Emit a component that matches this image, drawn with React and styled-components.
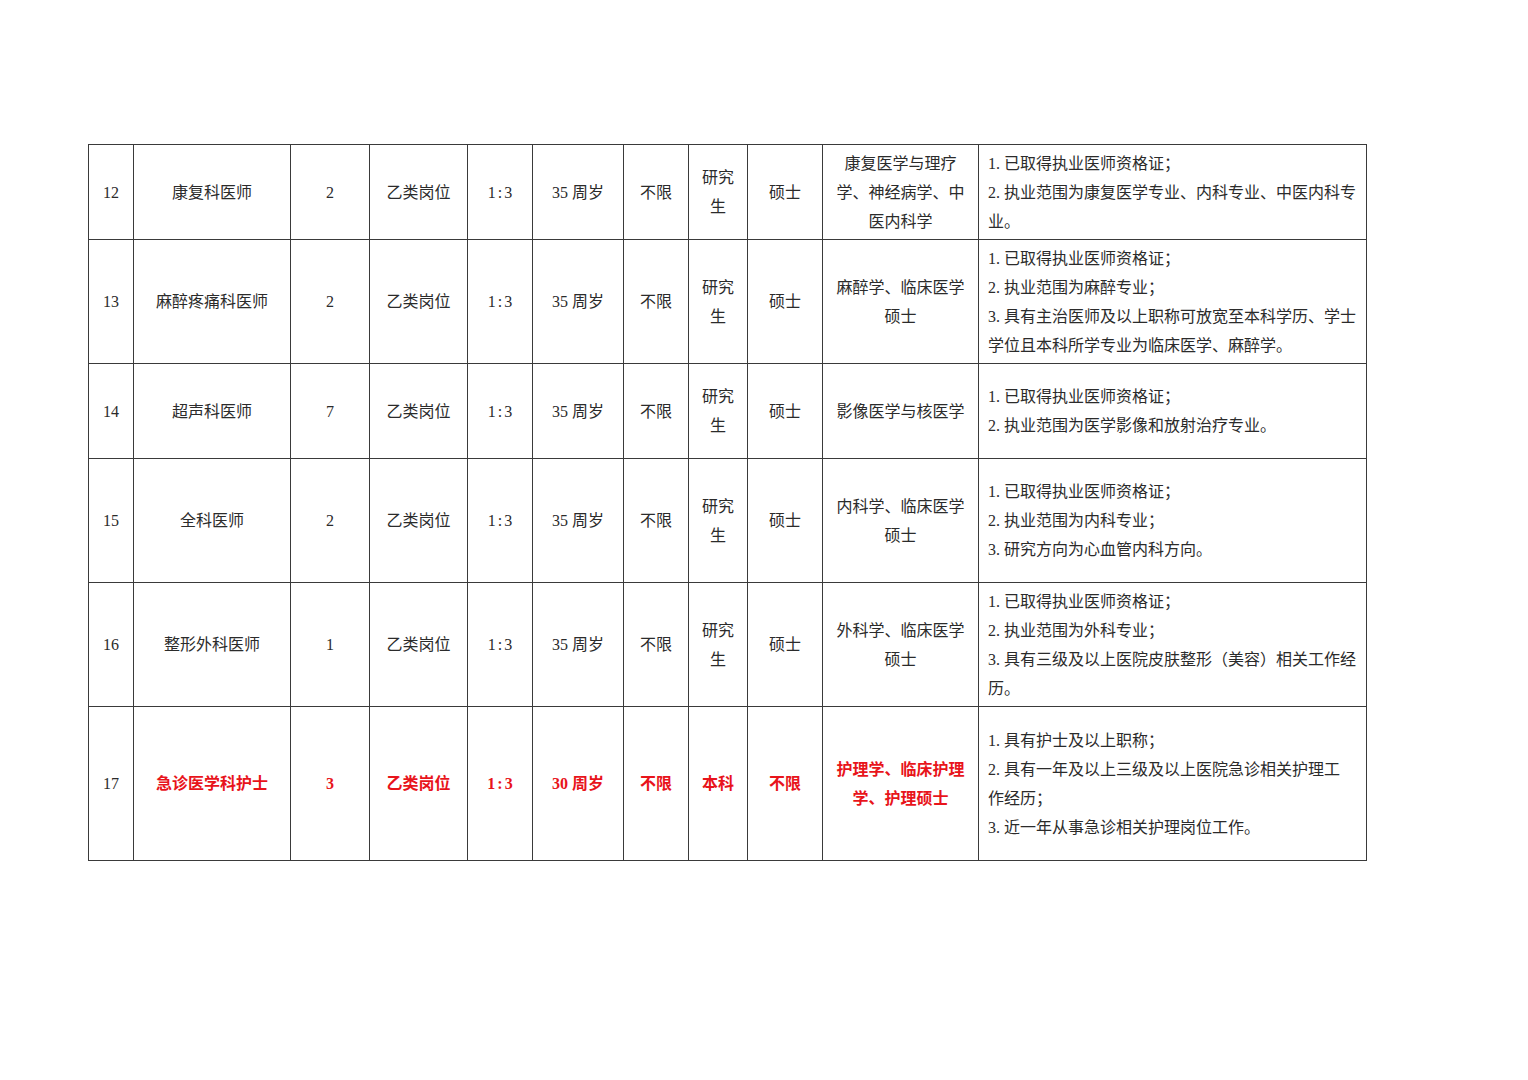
import styled, { createGlobalStyle } from 'styled-components';

const GlobalStyle = createGlobalStyle`
  html, body {
    margin: 0;
    padding: 0;
    background: #ffffff;
  }
  body {
    font-family: "Liberation Serif", "Noto Sans CJK SC", serif;
  }
`;

const widths = [45, 157, 79, 98, 65, 91, 65, 59, 75, 156, 388];

const rows = [
  {
    no: '12',
    name: '康复科医师',
    count: '2',
    type: '乙类岗位',
    ratio: '1:3',
    age: '35 周岁',
    limit: '不限',
    edu: ['研究', '生'],
    degree: '硕士',
    major: ['康复医学与理疗', '学、神经病学、中', '医内科学'],
    req: ['1. 已取得执业医师资格证；', '2. 执业范围为康复医学专业、内科专业、中医内科专', '业。'],
    height: 95,
  },
  {
    no: '13',
    name: '麻醉疼痛科医师',
    count: '2',
    type: '乙类岗位',
    ratio: '1:3',
    age: '35 周岁',
    limit: '不限',
    edu: ['研究', '生'],
    degree: '硕士',
    major: ['麻醉学、临床医学', '硕士'],
    req: [
      '1. 已取得执业医师资格证；',
      '2. 执业范围为麻醉专业；',
      '3. 具有主治医师及以上职称可放宽至本科学历、学士',
      '学位且本科所学专业为临床医学、麻醉学。',
    ],
    height: 124,
  },
  {
    no: '14',
    name: '超声科医师',
    count: '7',
    type: '乙类岗位',
    ratio: '1:3',
    age: '35 周岁',
    limit: '不限',
    edu: ['研究', '生'],
    degree: '硕士',
    major: ['影像医学与核医学'],
    req: ['1. 已取得执业医师资格证；', '2. 执业范围为医学影像和放射治疗专业。'],
    height: 95,
  },
  {
    no: '15',
    name: '全科医师',
    count: '2',
    type: '乙类岗位',
    ratio: '1:3',
    age: '35 周岁',
    limit: '不限',
    edu: ['研究', '生'],
    degree: '硕士',
    major: ['内科学、临床医学', '硕士'],
    req: ['1. 已取得执业医师资格证；', '2. 执业范围为内科专业；', '3. 研究方向为心血管内科方向。'],
    height: 124,
  },
  {
    no: '16',
    name: '整形外科医师',
    count: '1',
    type: '乙类岗位',
    ratio: '1:3',
    age: '35 周岁',
    limit: '不限',
    edu: ['研究', '生'],
    degree: '硕士',
    major: ['外科学、临床医学', '硕士'],
    req: [
      '1. 已取得执业医师资格证；',
      '2. 执业范围为外科专业；',
      '3. 具有三级及以上医院皮肤整形（美容）相关工作经',
      '历。',
    ],
    height: 124,
  },
  {
    no: '17',
    name: '急诊医学科护士',
    count: '3',
    type: '乙类岗位',
    ratio: '1:3',
    age: '30 周岁',
    limit: '不限',
    edu: ['本科'],
    degree: '不限',
    major: ['护理学、临床护理', '学、护理硕士'],
    req: [
      '1. 具有护士及以上职称；',
      '2. 具有一年及以上三级及以上医院急诊相关护理工',
      '作经历；',
      '3. 近一年从事急诊相关护理岗位工作。',
    ],
    height: 154,
    highlight: true,
  },
];

const Page = styled.div`
  padding: 144px 0 0 88px;
  min-height: 1080px;
  box-sizing: border-box;
`;

const Table = styled.table`
  border-collapse: collapse;
  table-layout: fixed;
  width: 1278px;
  color: #2b2b2b;
  font-size: 16px;
  line-height: 29px;
`;

const Row = styled.tr`
  height: ${(p) => p.$h}px;
`;

const Cell = styled.td`
  border: 1px solid #3a3a3a;
  padding: 0;
  text-align: center;
  vertical-align: middle;
  white-space: nowrap;
  color: ${(p) => (p.$red ? '#e8141b' : 'inherit')};
  font-weight: ${(p) => (p.$red ? 700 : 400)};
`;

const RatioCell = styled(Cell)`
  letter-spacing: 2px;
  text-indent: 2px;
`;

const ReqCell = styled(Cell)`
  text-align: left;
  padding-left: 9px;
`;

const Line = styled.div`
  display: block;
`;

const Lines = ({ items }) => items.map((t, i) => <Line key={i}>{t}</Line>);

export default function App() {
  return (
    <>
      <GlobalStyle />
      <Page>
        <Table>
          <colgroup>
            {widths.map((w, i) => (
              <col key={i} style={{ width: w }} />
            ))}
          </colgroup>
          <tbody>
            {rows.map((r) => {
              const red = !!r.highlight;
              return (
                <Row key={r.no} $h={r.height}>
                  <Cell>{r.no}</Cell>
                  <Cell $red={red}>{r.name}</Cell>
                  <Cell $red={red}>{r.count}</Cell>
                  <Cell $red={red}>{r.type}</Cell>
                  <RatioCell $red={red}>{r.ratio}</RatioCell>
                  <Cell $red={red}>{r.age}</Cell>
                  <Cell $red={red}>{r.limit}</Cell>
                  <Cell $red={red}>
                    <Lines items={r.edu} />
                  </Cell>
                  <Cell $red={red}>{r.degree}</Cell>
                  <Cell $red={red}>
                    <Lines items={r.major} />
                  </Cell>
                  <ReqCell>
                    <Lines items={r.req} />
                  </ReqCell>
                </Row>
              );
            })}
          </tbody>
        </Table>
      </Page>
    </>
  );
}
